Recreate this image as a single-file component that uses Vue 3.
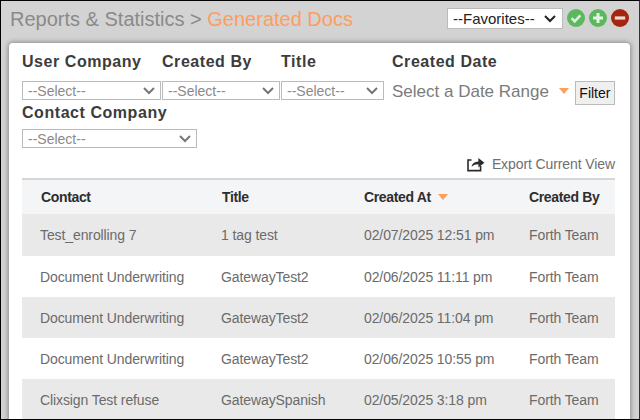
<script setup>
const rows = [
  ['Test_enrolling 7', '1 tag test', '02/07/2025 12:51 pm', 'Forth Team'],
  ['Document Underwriting', 'GatewayTest2', '02/06/2025 11:11 pm', 'Forth Team'],
  ['Document Underwriting', 'GatewayTest2', '02/06/2025 11:04 pm', 'Forth Team'],
  ['Document Underwriting', 'GatewayTest2', '02/06/2025 10:55 pm', 'Forth Team'],
  ['Clixsign Test refuse', 'GatewaySpanish', '02/05/2025 3:18 pm', 'Forth Team'],
]
</script>

<template>
  <div class="page">
    <header class="top">
      <h1 class="crumb">Reports &amp; Statistics &gt; <span class="accent">Generated Docs</span></h1>
      <div class="favs">
        <select class="fav-select"><option>--Favorites--</option></select>
        <svg class="round" viewBox="0 0 18 18"><circle cx="9" cy="9" r="9" fill="#5cb85c"/><path d="M4.6 9.2l3.1 3.1 5.7-5.9" fill="none" stroke="#dff0df" stroke-width="2.6"/></svg>
        <svg class="round" viewBox="0 0 18 18"><circle cx="9" cy="9" r="9" fill="#5cb85c"/><path d="M9 4v10M4 9h10" fill="none" stroke="#e6f3e6" stroke-width="3"/></svg>
        <svg class="round" viewBox="0 0 18 18"><circle cx="9" cy="9" r="9" fill="#a5260e"/><path d="M3.8 9h10.4" fill="none" stroke="#eadad6" stroke-width="3.2"/></svg>
      </div>
    </header>

    <main class="card">
      <div class="filters">
        <div class="field f1"><label>User Company</label><select class="sel"><option>--Select--</option></select></div>
        <div class="field f2"><label>Created By</label><select class="sel"><option>--Select--</option></select></div>
        <div class="field f3"><label>Title</label><select class="sel"><option>--Select--</option></select></div>
        <div class="field f4">
          <label>Created Date</label>
          <div class="range">
            <span>Select a Date Range</span>
            <i class="tri"></i>
            <button class="filter-btn">Filter</button>
          </div>
        </div>
      </div>
      <div class="field f5"><label>Contact Company</label><select class="sel"><option>--Select--</option></select></div>

      <div class="export">
        <svg class="exp-icon" viewBox="0 0 18 15"><path d="M4.5 3H1v10.6h12.6V9" fill="none" stroke="#2b2b2b" stroke-width="1.6"/><path d="M4.6 9.8C5 6.4 7.6 4.6 11.4 4.4V1l6 4.8-6 4.6V7.2C8.6 7.2 6.4 7.9 4.6 9.8z" fill="#2b2b2b"/></svg>
        <span>Export Current View</span>
      </div>

      <div class="table">
        <div class="row head">
          <span class="h1">Contact</span>
          <span class="h2">Title</span>
          <span class="h3">Created At <i class="tri small"></i></span>
          <span>Created By</span>
        </div>
        <div v-for="(r, i) in rows" :key="i" class="row body" :class="{ alt: i % 2 === 0, first: i === 0 }">
          <span>{{ r[0] }}</span><span>{{ r[1] }}</span><span>{{ r[2] }}</span><span>{{ r[3] }}</span>
        </div>
      </div>
    </main>
  </div>
</template>

<style>
html, body { margin: 0; overflow: hidden; }
</style>

<style scoped>
.page {
  width: 640px; height: 420px; box-sizing: border-box;
  border: 1px solid #000; border-right-color: #333; background: #d3d3d3;
  overflow: hidden; font-family: "Liberation Sans", Arial, sans-serif;
}
.top { display: flex; justify-content: space-between; height: 42px; padding: 6px 9px 0 9px; box-sizing: border-box; }
.crumb { margin: 0; font-size: 20px; line-height: 24px; font-weight: 400; color: #8a8a8a; }
.accent { color: #ff9d5c; }
.favs { display: flex; align-items: flex-start; gap: 4px; padding-top: 1px; margin-right: 1px; }
.fav-select {
  appearance: none; width: 116px; height: 21px; box-sizing: border-box; border: 1px solid #bbb; color: #222;
  font: 15px "Liberation Sans", Arial, sans-serif; padding: 0 0 0 5px; border-radius: 0;
  background: #fff url("data:image/svg+xml,%3Csvg xmlns='http://www.w3.org/2000/svg' width='12' height='8'%3E%3Cpath d='M1 1l5 5 5-5' fill='none' stroke='%23222' stroke-width='2'/%3E%3C/svg%3E") no-repeat right 6px center;
}
.round { width: 18px; height: 18px; margin-top: 1px; }
.card {
  margin-left: 8px; width: 621px; height: 400px; box-sizing: border-box;
  background: #fff; border-radius: 4px 4px 0 0; padding: 9px 15px 0 13px;
  box-shadow: 0 0 5px 1px rgba(0,0,0,.35);
}
.filters { display: flex; }
.field { display: flex; flex-direction: column; }
.field label { font-size: 16px; line-height: 20px; font-weight: 700; letter-spacing: .55px; color: #3c3c3c; height: 29px; white-space: nowrap; }
.f1 { width: 140px; } .f2 { width: 119px; } .f3 { width: 111px; }
.f1 .sel { width: 139px; } .f2 .sel { width: 118px; } .f3 .sel { width: 103px; }
.f5 { height: 50px; }
.f5 label { height: 26px; }
.f5 .sel { width: 175px; }
.sel {
  appearance: none; height: 19px; box-sizing: border-box; border: 1px solid #bbb;
  color: #8a8a8a; font: 14px "Liberation Sans", Arial, sans-serif; padding: 0 0 0 5px; border-radius: 0;
  background: #fff url("data:image/svg+xml,%3Csvg xmlns='http://www.w3.org/2000/svg' width='12' height='8'%3E%3Cpath d='M1 1l5 5 5-5' fill='none' stroke='%23777' stroke-width='2'/%3E%3C/svg%3E") no-repeat right 5px center;
}
.range { display: flex; align-items: flex-start; font-size: 17px; color: #7b7b7b; height: 22px; line-height: 21px; }
.tri { display: inline-block; width: 0; height: 0; border-left: 5px solid transparent; border-right: 5px solid transparent; border-top: 6px solid #ff9d5c; margin: 7px 0 0 10px; }
.filter-btn {
  margin: 0 0 0 6px; width: 40px; height: 24px; padding: 0; border: 1px solid #bbb;
  background: #efefef; color: #111; font: 14px "Liberation Sans", Arial, sans-serif;
}
.export { display: flex; justify-content: flex-end; align-items: center; gap: 7px; height: 22px; font-size: 14px; letter-spacing: -.1px; color: #6f6f6f; }
.exp-icon { width: 18px; height: 15px; }
.table { margin-top: 3px; font-size: 14px; }
.row { display: grid; grid-template-columns: 181px 143px 165px 1fr; align-items: center; padding-left: 18px; letter-spacing: -.1px; }
.head { height: 36px; padding-bottom: 1px; box-sizing: border-box; border-top: 2px solid #d6d6d6; background: #f4f5f7; color: #2e2e2e; font-weight: 700; letter-spacing: -.35px; }
.head .h1 { padding-left: 1px; } .head .h2 { padding-left: 1px; }
.head .h3 { display: flex; align-items: center; }
.tri.small { margin: 1px 0 0 7px; }
.body { height: 41px; color: #6b6b6b; }
.body.first { height: 42px; }
.alt { background: #e9e9e9; }
</style>
